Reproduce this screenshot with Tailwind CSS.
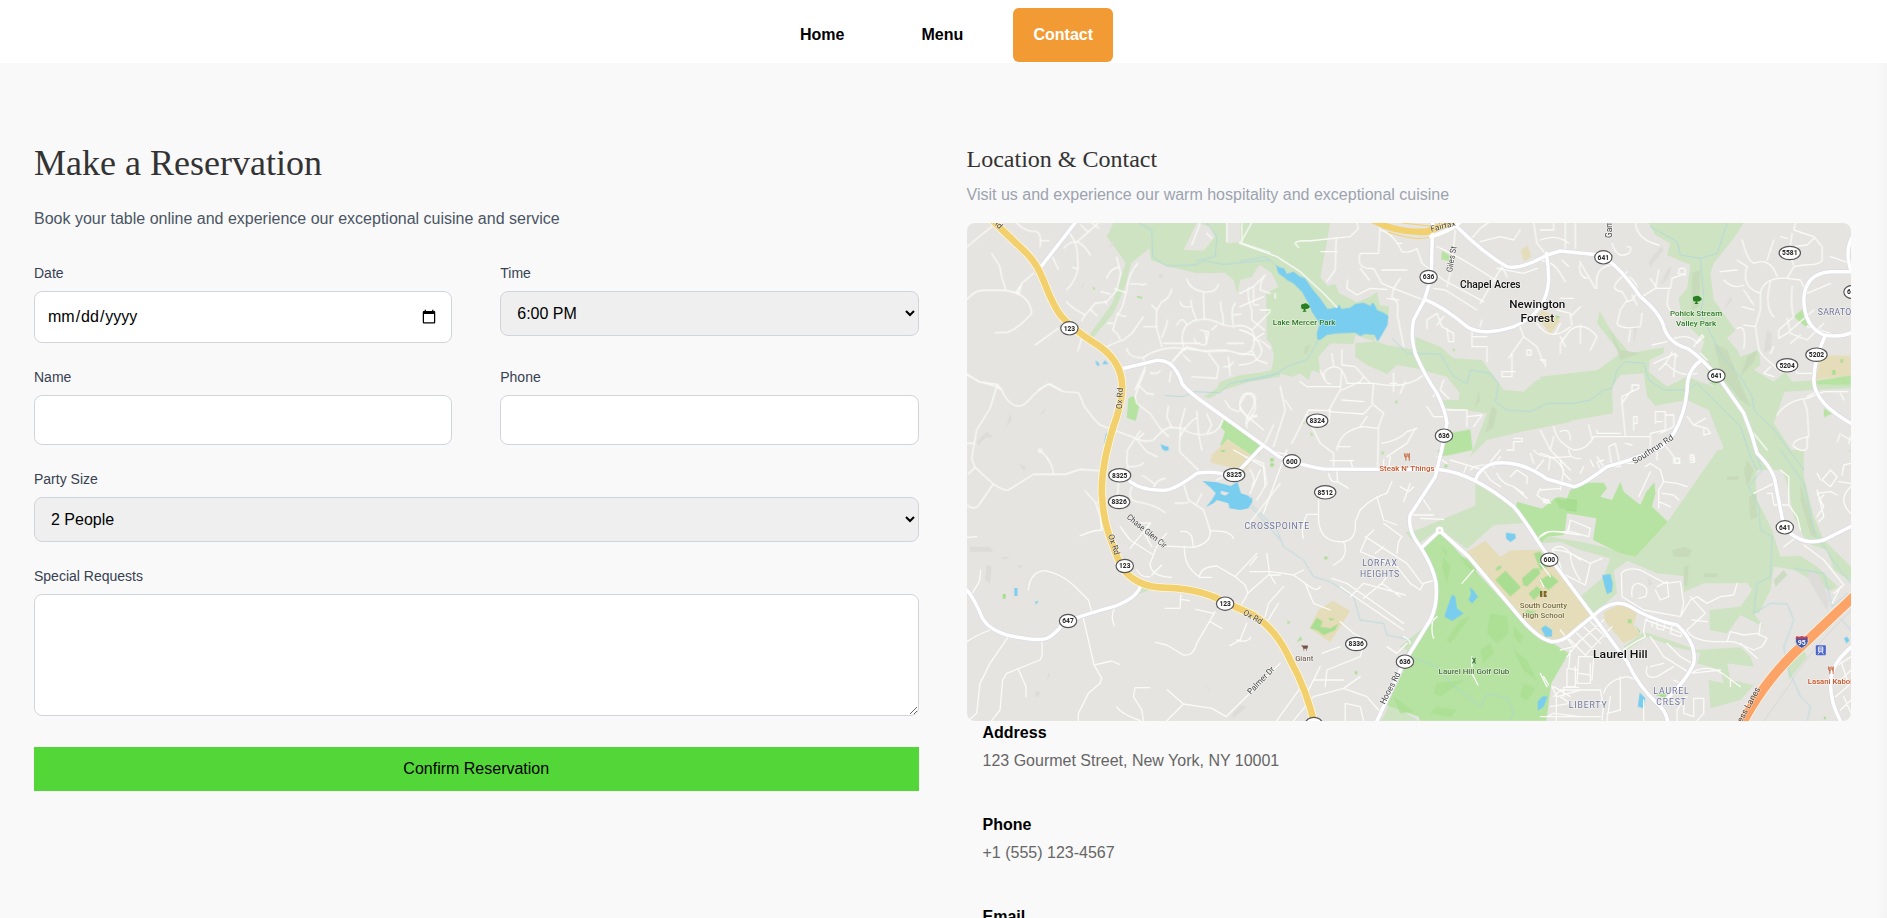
<!DOCTYPE html>
<html lang="en">
<head>
<meta charset="utf-8">
<title>Contact</title>
<script src="https://cdn.jsdelivr.net/npm/@tailwindcss/browser@4"></script>
</head>
<body class="h-[918px] overflow-hidden bg-[#f9f9f9] font-['Liberation_Sans',Arial,sans-serif] text-base text-black">
<div class="relative h-full overflow-hidden">
<header class="flex h-[63px] items-start bg-white pt-2 pl-[780px] font-bold">
  <a class="flex h-[54px] items-center px-5">Home</a>
  <a class="ml-[37px] flex h-[54px] items-center px-5">Menu</a>
  <a class="ml-[30px] flex h-[54px] w-[100px] items-center justify-center rounded-md bg-[#f29b34] text-white">Contact</a>
</header>
<main class="grid grid-cols-2 gap-12 pr-9 pl-[34px] pt-20">
  <section>
    <h1 class="font-['Liberation_Serif',serif] text-4xl leading-10 text-[#333333]">Make a Reservation</h1>
    <p class="mt-6 text-[#4b5563]">Book your table online and experience our exceptional cuisine and service</p>
    <form class="mt-8 text-black">
      <div class="grid grid-cols-2 gap-x-12 gap-y-6">
        <div><label class="mb-2 block text-sm text-[#374151]">Date</label><input type="date" class="block h-[52px] w-full rounded-lg border border-[#d1d5db] bg-white px-3"></div>
        <div><label class="mb-2 block text-sm text-[#374151]">Time</label><select class="block h-[45px] w-full rounded-lg border border-[#d1d5db] bg-[#efefef] px-3"><option>6:00 PM</option></select></div>
        <div><label class="mb-2 block text-sm text-[#374151]">Name</label><input type="text" class="block h-[50px] w-full rounded-lg border border-[#d1d5db] bg-white px-3"></div>
        <div><label class="mb-2 block text-sm text-[#374151]">Phone</label><input type="tel" class="block h-[50px] w-full rounded-lg border border-[#d1d5db] bg-white px-3"></div>
      </div>
      <label class="mt-6 mb-2 block text-sm text-[#374151]">Party Size</label>
      <select class="block h-[45px] w-full rounded-lg border border-[#d1d5db] bg-[#efefef] px-3"><option>2 People</option></select>
      <label class="mt-6 mb-2 block text-sm text-[#374151]">Special Requests</label>
      <textarea class="block h-[122px] w-full rounded-lg border border-[#d1d5db] bg-white p-3"></textarea>
      <button type="button" class="mt-[31px] block h-11 w-full bg-[#53d637]">Confirm Reservation</button>
    </form>
  </section>
  <section>
    <h2 class="font-['Liberation_Serif',serif] text-2xl leading-8 text-[#333333]">Location &amp; Contact</h2>
    <p class="mt-2 text-[#9ca3af]">Visit us and experience our warm hospitality and exceptional cuisine</p>
    <div class="mt-4 h-[498px] overflow-hidden rounded-lg bg-[#e5e4e0]">
<svg class="block h-full w-full" viewBox="2901 669 2652 1494" preserveAspectRatio="none" fill="none" stroke-linecap="round" stroke-linejoin="round" font-family="Roboto, sans-serif">
<!-- parks and land use -->
<g fill="#cee3c2">
  <g transform="translate(2850 390)">
    <path d="M490 279L470 320L527 398L487 520L418 615L430 622L490 550L525 470L543 400L598 355L603 390L650 408L740 430L825 428L850 450L862 490L870 450L905 440L930 400L980 390L1100 500L1140 279Z"/>
    <path fill="#e5e4e0" d="M740 279L700 360L760 362L795 320L780 290ZM830 279V340L895 335V279Z"/>
  </g>
  <g transform="translate(2850 1020)"><path d="M960 0L975 60L960 95L870 105L810 125L800 145L760 170L780 175L820 150L900 125L990 110V0Z"/></g>
  <g transform="translate(3720 630)">
    <path d="M0 38H55L90 90L130 110L215 170L262 228L285 222L297 250L350 277L390 260L410 245L418 285L447 290L443 320L400 395L345 400V440L380 465L440 492L470 465L525 475L620 500L658 550L655 570L600 570L605 592L740 610L690 740L740 690L830 668L990 636V490L890 510L850 545L790 540L725 450L640 445L600 410L525 380V420L440 405L345 375L340 402L270 400L235 440L240 490L215 480L205 510L180 490L155 500L100 485L0 518V500L95 480L105 410L80 390L78 250L115 230L95 190L60 165L0 205Z"/>
  </g>
  <g transform="translate(4620 630)">
    <path d="M0 500L90 490L172 480L240 430L170 340L178 302L210 360L268 430L370 412L370 430L327 450L325 485L380 530L440 500L520 530L480 430L492 395L425 330L415 265L440 235L450 165L380 135L390 100L345 75L325 38H610L580 85L520 160L510 190L520 270L585 360L560 385L590 420L600 440L655 420L660 465L640 480L700 515L735 485L755 515L830 510L930 500V535L820 540L732 545L700 640L740 700L790 780H495L550 712L530 665L505 600L440 570L345 587L320 560L310 490L240 495L215 530L218 610L0 648Z"/>
  </g>
  <g transform="translate(4620 1350)">
    <path d="M532 0H790L790 80L820 200L850 270L932 350V395L880 360L860 300L800 280L760 200L740 100L700 0H660L645 90L650 150L695 240L720 320L780 318L830 350L892 410L870 422L760 360L700 350L690 420L655 490H640L670 530L600 495L560 550L508 540L508 480L600 470L635 420L620 398L580 400L490 400L430 427V378L350 370L262 332L220 362L230 430L160 492L120 440L190 380L210 325L120 300L60 275L0 280V255L120 275L200 293L280 320L382 215Z"/>
    <path d="M250 590L310 545L400 575L470 600L600 592L630 620L640 650L560 640L570 690L640 705L600 750L510 775L505 690L550 700L540 660L470 640L480 610L400 590L320 560L260 600ZM740 630L790 600L800 620L745 690Z"/>
  </g>
  <g transform="translate(3750 1350)"><path d="M465 247L500 240L675 167V100L790 170L822 219L730 226L650 297L568 235L500 285ZM560 500L600 520L480 620L400 800L390 812H505L440 770L470 600L448 590Z"/></g>
  <path transform="translate(2850 1350)" d="M560 435L578 410L605 417Z"/>
</g>
<g fill="#c6d9b9" opacity=".8">
  <path transform="translate(4620 630)" d="M455 190L480 180L475 290L455 300ZM520 400L560 420L600 520L630 590L600 570L545 500ZM205 350L240 420L300 430L240 450ZM620 440L650 420L640 455L600 500Z"/>
  <path transform="translate(4620 1350)" d="M620 30L640 60L620 110L610 60ZM625 140L645 130L650 200L630 210ZM560 80L595 78L590 90H560ZM395 300L430 290L455 300L445 320H400ZM430 350L445 345L440 410L430 405ZM490 370H530V382H490ZM780 100L810 200L830 265L810 255L780 150ZM700 390L730 360L740 375L705 410Z"/>
  <path transform="translate(3720 630)" d="M755 590L770 600L760 650L735 670ZM715 545L720 570L705 595ZM195 410L210 405L200 430L190 432Z"/>
</g>
<g fill="#dddcd8">
  <path transform="translate(2850 1020)" d="M180 218L185 240L170 258ZM290 200L280 220L268 224ZM110 275L130 290L105 295L85 315L80 305ZM205 370L225 380V395Z"/>
  <path transform="translate(2850 1350)" d="M60 290L120 290L130 305H60ZM155 320H180L170 328H155ZM110 345L125 350L120 400L105 390ZM200 345L220 348L210 355ZM300 675L290 690L295 670ZM255 725H272L265 740H255ZM870 765L890 770L850 805L845 795ZM760 708L775 715L780 722Z"/>
  <path transform="translate(4620 630)" d="M360 110L370 120L330 170L325 155ZM380 180L395 170L380 210L360 225ZM570 260L575 270L550 300ZM680 360L695 370L690 420L670 430ZM280 350L290 352L280 400Z"/>
  <path transform="translate(4620 1350)" d="M810 360L840 380L865 450L860 480L840 450L800 380ZM320 340L322 380L335 400L325 410Z"/>
  <path transform="translate(2850 390)" d="M625 433H642L630 447ZM490 332L495 340L475 355ZM400 460L402 465L390 478Z"/>
</g>
<g fill="#b6e3a1">
  <path transform="translate(4620 1350)" d="M90 120L145 98L190 98L200 115L180 140L215 150L240 95L250 125L300 165L318 125L342 97L345 130L335 170L382 215L285 320L240 310L158 270L168 205L80 190L73 245L0 250V180L45 145L80 145Z"/>
  <path transform="translate(4620 1350)" fill="#a4db8f" d="M60 145L110 150L108 185L57 180Z"/>
  <path transform="translate(3750 1350)" d="M568 245L518 292L552 365L557 390V490L490 600L410 765L505 800L510 812H888L903 700L955 610L900 575L820 520ZM800 155L860 172L910 185L920 140L950 145L940 255L890 260L865 285L795 180ZM560 0H620L575 20Z"/>
  <path transform="translate(2850 1020)" d="M820 235L935 315L910 350L832 298L820 320L810 315L825 275L812 262ZM535 175L550 168L567 198L557 243L530 233Z"/>
  <path transform="translate(3720 630)" d="M0 648L70 705L55 735L0 700ZM620 670L690 658L697 720L620 737L605 735ZM605 122L630 138L625 153L603 148ZM188 635L197 637L190 643ZM465 572h7v8h-7zM635 415l10 3l-4 8ZM210 668l8 2v8h-6ZM93 745h8v8h-8zM93 760h8v8h-8zM423 724h8v9h-8z"/>
  <path transform="translate(4620 630)" d="M760 320L785 298L805 340L795 350ZM820 515L930 495V525L822 522ZM850 595L875 610L850 622ZM505 518L550 510L520 525ZM925 720L930 720V728Z"/>
  <path transform="translate(2850 390)" d="M428 470L436 474L430 482ZM560 497L577 500L575 507L562 503Z"/>
</g>
<g fill="#e5ddb9">
  <path transform="translate(3750 1350)" d="M705 272L650 305L820 505L890 572L940 568L1028 500L945 390L885 315L865 299L780 301L750 320ZM178 535L205 480L248 452L300 482L240 577Z"/>
  <path transform="translate(4620 1350)" d="M190 487L240 462L290 487L280 525L300 555L250 580L195 515Z"/>
  <path transform="translate(2850 1020)" d="M780 365L785 345L832 298L910 350L885 392L790 370Z"/>
  <path transform="translate(3720 630)" d="M842 120L862 107L873 140L850 155ZM890 320L905 300L960 330L930 373ZM0 715L40 745L15 780H0Z"/>
  <path transform="translate(4620 630)" d="M840 437L930 437V497L825 508Z"/>
</g>
<g fill="#a9de92">
  <path transform="translate(3750 1350)" d="M735 390L765 362L812 412L780 440ZM735 355L750 345L755 352L742 363ZM815 385L850 355H865L870 370L830 410L818 405ZM868 390L900 372L925 393L895 420L870 400ZM835 430L860 408L878 425L850 450ZM850 310L870 305L895 350L870 360ZM180 535L200 503L218 515L210 530L240 535L265 520L255 540L220 555L200 540ZM235 503L255 507L240 513ZM222 320h10v8h-10zM60 25h10v10h-10zM60 40h10v10h-10zM314 663h7v10h-7zM140 575L152 558L155 570ZM112 513h6v8h-6zM583 44h8v8h-8zM912 145L980 155L975 180L928 175ZM820 490L830 480L860 485L840 495Z"/>
  <path transform="translate(3750 1350)" opacity=".75" d="M570 290L590 300V320ZM580 320L600 350L590 400L575 350ZM720 490L770 500L775 550L740 580L710 550ZM630 320L670 330L680 370L650 350ZM630 510L660 500L600 580L590 570ZM690 600L720 580L730 610L700 640ZM560 700L640 690L570 740L550 730ZM790 600L830 630L860 690L820 660ZM790 530L820 560L810 580L790 560ZM430 740L470 770L490 785L450 790ZM560 770L620 780L600 800L540 790ZM820 700L855 715L830 750L810 740Z"/>
  <path transform="translate(4620 630)" d="M875 480h10v14h-10zM900 448h8v10h-8zM45 315L60 320L50 328Z"/>
  <path transform="translate(4620 1350)" d="M262 508h12v12h-12zM285 525L300 545L297 548ZM345 735L375 730L380 745ZM850 800h6v8h-6z"/>
  <path transform="translate(2850 1350)" d="M158 432h9v14h-9zM810 0h18l-10 8Z"/>
</g>
<!-- water -->
<g fill="#79cdee">
  <path transform="translate(3720 630)" d="M107 165L118 172L132 175L140 192L160 185L180 200L195 205L215 235L240 265L262 297L290 292L297 284L303 297L330 293L345 282L370 278L390 288L397 277L405 287L410 300L430 308L444 317L442 345L425 375L412 395L403 375L375 372L360 378L345 368L290 370L260 375L240 390L231 388L230 370L238 340L215 305L205 280L185 245L160 220L140 210L132 202L115 190Z"/>
  <path transform="translate(2850 1350)" d="M757 93L800 97L842 108L862 95L872 130L895 137L906 155L895 175L870 180L838 175L835 160L800 150L790 160L768 171L785 150L797 130L780 112ZM193 414H202V438H193ZM255 455L265 452L258 464Z"/>
  <path transform="translate(2850 1350)" fill="#e5e4e0" d="M812 122L838 128L825 137L812 132Z"/>
  <path transform="translate(2850 1020)" d="M632 312L645 318L655 320L656 330L645 333L635 325ZM436 62L446 68L448 78L440 76ZM456 72L465 61L474 72ZM468 280L476 277L466 315L462 310Z"/>
  <path transform="translate(3750 1350)" d="M605 434L615 440L620 475L640 490L605 513L582 500L590 475ZM658 412L668 420L683 440L665 460L655 450L662 430ZM767 248L795 252L796 265L780 276L767 265ZM872 535L885 526L905 540V560L885 560ZM862 755L875 740L892 738L880 770L862 782ZM0 140L6 145V155L0 163Z"/>
  <path transform="translate(4620 1350)" d="M185 375L210 372L217 400L215 425L200 432L193 410ZM298 728L315 745L310 775L292 770ZM910 565L920 560L927 572L918 580Z"/>
</g>
<g stroke="#a7d5e4" stroke-width="2">
  <path transform="translate(2850 390)" d="M565 279L605 300L608 380L650 408L735 405L760 392L820 403L960 390M770 279L800 320L795 380L740 392"/>
  <path transform="translate(3720 630)" d="M0 153L75 140L105 165M0 515L90 500L150 465L200 450L235 390M455 385L500 430L600 432L640 500L680 520L690 480L750 490L775 520L765 575L800 600L870 605L920 580L990 580"/>
  <path transform="translate(4620 630)" d="M90 582L150 570L190 540L215 535L230 480L255 455L310 460L325 510L370 540L440 540L470 520L550 600L600 650L630 740L650 780M330 50L410 95L420 135L480 145L530 130L560 40M480 150L490 260L480 310L545 440L600 500L635 560L640 600L700 660L790 780"/>
  <path transform="translate(4620 1350)" d="M640 0L665 60L625 110L655 170L660 240L695 260L690 380L650 400L640 490L690 460L740 462L760 510L730 590L740 650L780 740L810 770L800 812M760 355L850 370L875 470L920 430M720 0L790 100L820 240L870 320L930 400M900 505L930 540"/>
  <path transform="translate(3750 1350)" d="M0 160L80 240L100 290L160 330L190 380L240 395L310 440L330 510L400 520L410 555L480 570M480 620L560 650L600 700L690 770L710 730L770 745L790 790L780 812"/>
  <path transform="translate(2850 1020)" d="M645 167L700 170L730 155L810 158L840 130L960 105L990 100M900 500L930 530L990 600"/>
</g>
<!-- local streets -->
<g stroke="#fafaf7" stroke-width="4">
  <g transform="translate(2850 390)"><path d="M51 350L125 290M125 370L150 410L155 440L167 480M51 508Q75 480 100 481L165 481Q200 488 207 490L215 460L250 430M190 487Q240 500 245 550Q200 600 170 607L135 608M207 490L200 484L215 462M255 645L325 595M200 279Q225 305 260 305Q275 310 270 350M270 332H298M307 380L325 418M350 300Q380 330 382 370L384 415Q378 450 350 480M368 412L382 416M342 355Q355 335 380 335Q405 345 420 375M382 335L445 279M393 285L410 303L418 305M425 279L447 295M350 515Q360 530 405 555L395 572M405 555L435 520L470 515L500 480L512 430L500 382M452 485L480 492M465 513L470 523M470 445Q480 415 505 412M420 537L440 557M493 476L525 487M563 400Q535 430 530 480L517 530L500 560L488 600L500 610L510 627M540 462H570Q585 468 588 460M500 550Q515 560 527 558M472 580H488M395 625L383 663M467 653Q485 640 520 630L545 610L580 560M580 590H622M605 525L620 540L635 515Q655 510 665 478M620 540L618 590L635 650M652 570Q650 590 635 622M530 655Q535 685 580 683Q600 665 650 655Q690 650 705 660M580 683L585 705M555 780L585 712M600 728Q620 735 630 722M658 755L663 725M667 695L710 650L765 665L835 662L880 675L905 662Q920 625 905 600Q880 580 850 590L820 585Q790 570 765 567L730 572L705 590Q690 620 700 650M710 448Q720 480 760 485L762 567M760 485Q800 490 805 462M690 515Q695 535 720 530M722 510Q725 540 738 567M680 585Q690 565 700 570L712 585M750 600L775 605Q770 640 765 645Q735 645 732 625M765 605L770 640M800 585L785 600M812 515Q810 535 818 555L820 585M855 520Q840 540 850 585M850 555L873 552M830 640H880M895 472Q890 500 905 540L905 570L943 600M910 525H925M945 435Q930 450 930 480L960 490M960 545L905 600M905 662L920 690L950 700M912 630Q930 625 960 655M775 670L805 710L800 745L725 740M835 680L840 735M820 710H838L850 695M700 675L720 695M51 735L90 755L140 770L155 780M265 780L295 762L330 780M875 279V340L960 368M750 279L725 345M830 279V335M770 310L785 325"/></g>
  <g transform="translate(2850 1020)"><path d="M51 102L85 125L142 133L155 150Q180 205 215 197Q230 190 250 165Q290 130 300 132L340 155L385 158Q395 175 400 195L430 235L450 255L545 290Q580 310 610 300Q640 265 660 262L695 265Q730 290 770 282Q805 280 820 235M142 133L120 205L80 270L65 355L75 382L130 432M51 310H70M75 382L55 402M51 495Q75 515 90 490L130 432Q165 455 175 450L250 403H345L390 388L450 392M310 403Q310 370 275 335M405 453L435 485L450 530L455 570M442 487L450 480M585 90L565 140L555 170L560 190L600 220L630 265L655 290M565 135L590 160L610 163M580 280L560 300M570 273L532 330L530 360L535 400M565 305L590 335L620 350M532 380Q570 382 580 368M655 198L650 230L665 262M705 205L690 260L688 335L745 390M690 290L705 262M740 213L745 280L755 330M770 222L785 255L770 282M705 265Q735 230 740 235M825 182L840 205L865 215M870 200L895 240L920 225M870 210Q865 165 890 160Q915 155 915 180Q910 205 895 225L888 245L890 262M905 225L920 230M970 255L945 310M850 395L800 420M610 445Q615 420 645 415M577 406Q600 420 610 430M505 430L503 465M545 440Q530 480 560 485Q620 495 645 518M700 430L715 480L760 510L780 570M755 460L740 490M675 490L715 488M885 350L940 370L950 430L920 480M900 390Q920 420 905 440M990 430L890 560M555 550L600 548M590 570L600 548M640 10H750M670 60L700 25L760 32L830 30"/><circle cx="270" cy="332" r="5"/></g>
  <g transform="translate(3720 630)"><path d="M35 38L0 100L110 140L180 185L250 250L290 292M165 100Q170 90 205 93L330 80L355 55L350 38M165 100L175 113M242 125H290M288 85L285 180L260 215M420 38L415 130H360Q345 180 400 175L425 220L460 235L550 270M420 60Q460 70 485 125Q510 130 530 115L545 160L610 210L730 275M470 100H485M460 235L455 260L472 280V318L490 408M425 180H500M387 210L360 175M322 210L320 235L350 255L390 235L440 238M460 235L480 205M440 265L475 270M590 110Q660 140 780 220M620 230L635 170L645 60M580 235L615 240L710 300M720 280L785 170L800 200M690 90L720 55L745 38M720 95L780 80L820 90L840 60M880 38L890 100L915 130M590 310L560 330V355M590 310L605 350L640 370V395H625L620 355M610 320L590 345M695 355V410H740V455M695 380H740M725 330L720 350M835 340L850 380L890 410L910 460M850 380L815 430V500H785V485H825M815 430L805 445M900 450H915V470M860 420h12v15h-12zM890 175L850 190L770 175M890 340Q930 400 990 350M960 340L945 370M70 200L40 230L0 250M40 230V280M0 290L70 260M0 360Q50 370 65 420Q60 460 0 465M40 390L70 370M0 430L40 435M105 250V265M60 300H90M120 528L135 600L100 710M155 600L135 570M155 700L205 600L265 602L300 540L305 480M180 515L200 530H300M240 480Q260 530 270 520M400 520H320Q310 470 280 470Q240 480 255 510M400 520Q500 540 550 495M400 520L395 580L430 610L415 650L412 780M270 600L265 640M265 605L370 612L400 580M305 570L370 575M370 500L360 515L305 540M460 490V545M450 520H470M305 420V465L345 470L390 520M275 430L280 465M200 610L220 660L240 700L280 730V780M290 720Q300 660 370 650L412 655M290 710H330M360 650L380 620M425 700Q480 690 500 665L530 655M480 550L495 515M440 740L500 700L525 655M0 580L20 550Q50 555 45 600L20 640M0 600L70 660M145 735L80 720M610 510L600 540L625 565M590 540L580 560M560 590L580 620H610M620 600L680 600V650M680 620L725 615L700 650M690 780L700 770L790 755L870 780M820 685H845V695H820V720H800M900 660L930 720L990 780M870 730L880 760M940 680L930 720M760 770L780 740M880 720Q900 750 990 740"/></g>
  <g transform="translate(4620 630)"><path d="M0 90Q50 70 85 100M75 38V115M105 38V115M0 60H40V38M215 100Q230 150 265 130Q280 110 260 110M285 38Q290 90 355 105M0 150Q40 155 60 190L75 215M65 150L85 170M118 155L165 235M118 165Q115 200 140 205M215 165Q160 170 170 235M260 185L230 215Q210 240 245 245L260 270L240 300L230 340Q240 360 300 350L305 310M265 200Q310 230 275 270L260 275M275 255L290 285M305 260L345 235L355 180M330 205L350 235H390L395 205L435 190L433 175L418 175L413 190L435 195M385 240L380 285L400 320M60 265L100 265M50 300L90 310L95 345M120 290L90 320M60 430V400L90 360Q130 330 170 380L150 420M120 345V400M60 380L75 410M270 360L265 395M335 405L380 395M340 460L405 430L410 440M375 460L400 480Q430 500 470 490M355 480Q380 460 395 425M405 430L400 500M400 385Q450 370 470 400L490 380L485 375L470 395L460 410M480 430L500 450M540 185L590 180M550 210Q580 240 610 225M590 150L620 170Q600 230 660 250Q670 200 740 205L780 210L800 250L870 220M605 90Q620 150 640 160Q690 140 710 200M700 90L680 150M720 80L740 85M765 38L760 60L820 80L845 110V150Q840 165 790 165L760 170L740 205M755 70L745 130L760 165M760 110L800 105L820 85M660 250L660 300L645 350L655 420L670 440L720 485M690 215Q670 290 700 320M610 240L640 285M605 290L640 300M590 355Q620 340 610 415M645 350L610 345M690 430L700 410M690 470L670 490L700 500M755 230Q750 290 760 320L715 360V385L740 370L820 300M740 325L750 370L800 390L850 340M780 375L750 400M800 350L870 370M870 140L930 160M760 465L770 490H820M710 615Q740 570 800 565L850 545H920M790 570L800 600L805 680Q750 690 760 710Q790 730 800 715L800 680M800 560L830 545M900 550L910 570M900 670L890 695M905 675L930 690M930 680L925 700M640 670L680 720M240 670H170V660M245 585V560L295 535V525H275V545M270 545L245 580L255 680M280 640V620H290V640H280V660M345 640V605H375V660L330 670V720M345 635H365M375 615H400V650L360 670M440 620L460 645L500 655L510 670L490 675V655M460 645L495 625M40 650Q50 700 100 720Q140 720 160 680H330M60 665Q90 650 90 690M145 645L155 685M170 740L190 770L180 780L170 755M205 710L225 700L240 770L215 770ZM255 700L275 705M260 745H290V760H260M350 750V710L370 700L400 740V760M405 745h12v15h-12zM450 735h10v15h-10z"/></g>
  <g transform="translate(2850 1350)"><path d="M51 262L80 260M92 360L88 395L68 428M235 420Q240 365 285 362Q330 370 370 405L415 450L425 485M390 257L430 243L455 240L450 150M51 575Q80 555 120 540M175 560L120 640L90 700L80 790L55 812M275 575Q280 620 270 630L170 670L158 690L150 780L125 812M205 658L228 710V740M400 505L432 645L455 685L450 700L415 730L385 790V812M432 645L485 633L508 643M493 475Q480 500 493 527M598 713H555L550 740L575 780L580 812M500 770Q510 790 570 812M650 812L700 762L652 720M700 762L785 775L828 800L990 640M617 577L650 585L700 615Q730 620 740 580L795 485M737 478L790 490M780 515L815 535M645 475H690L692 435M690 448L718 452M875 462L893 430L955 375H990M855 380L920 310M748 382Q750 350 800 348L855 380L885 405L893 430M945 525L985 460M890 520L870 570L840 587M860 570Q890 580 902 562M703 290Q700 350 750 382H785M950 310L958 370M510 230L540 270L610 315M540 295L600 220M610 315Q620 280 650 250M580 245L605 290M610 315L600 340Q600 380 665 382M605 375L635 345M560 360Q575 385 600 380M730 290L725 260Q715 240 692 245M780 243Q840 240 850 265M780 240Q785 280 730 292L640 288M850 0L940 50L945 110"/></g>
  <g transform="translate(3750 1350)"><path d="M260 65L262 95L295 115M235 70Q240 100 262 95M300 30L310 60M240 32H310M205 150V210Q210 280 280 275Q320 270 315 215L330 180Q370 140 410 130M205 193H170Q150 240 160 265M280 275Q300 320 250 345M410 130L425 95M420 20L415 58M400 30V50H430M380 140L400 210L440 225M450 110L475 125L490 110M460 155L480 100M400 220L455 260L445 275L440 310M345 260L470 340L515 400M370 240L350 260L330 305L440 350M375 310L400 290M440 350L480 400L510 420L520 400L555 390M410 380L395 400L340 445M245 385L290 400L460 520M270 410L460 540M300 440L340 400L465 435M395 400L450 440M110 0L40 190M30 60L0 130M0 345L20 320M0 365H60L100 370L130 375L165 400L190 460L240 480M60 375L75 400M45 500L55 460L100 410M130 375L160 360M165 400Q200 430 210 410M270 515L310 550L345 570L330 620L230 660L225 710M190 690L280 690M215 610L270 590M280 715L350 740L385 780M130 812L190 740L280 715L330 680M80 812L160 700M170 730L210 650M285 812V760L330 770L340 812M410 590L440 610L470 580M460 560Q480 570 480 580M480 195H550M510 205L580 208M520 150L540 180M600 30L700 60L750 0M560 20L590 40M640 70L650 45M700 60L720 90L750 110M740 70Q750 100 790 110L830 145M780 80L800 60L830 80V100M790 110L820 130M870 115L860 135L890 160M880 150h15v8h-15zM895 60L900 20M855 60L880 30M930 30L940 70L960 90M865 265Q880 240 920 245L990 255M910 300Q960 300 990 330M870 390L880 410M550 500Q540 540 550 565M540 520L560 500M665 670L683 705M665 620V650M635 400L670 360M960 600L955 655L980 660M990 570L950 620M905 710L920 740L990 720M890 800L910 790L990 800M918 735V812M940 740V712H985M880 680L895 705"/></g>
  <g transform="translate(4620 1350)"><path d="M0 10Q50 20 70 60L60 120M0 120L60 115M10 145L30 160M85 0Q90 30 120 25M150 30L160 50M175 35L190 30M120 70L130 50M0 260L25 245L90 245L145 260L150 235L90 210L80 250M90 210L85 240M35 300Q60 275 90 310L150 340L135 405L65 370Q60 330 35 300M90 310Q90 350 120 390M150 340L185 325M0 340L30 380M245 440L243 370Q260 350 300 360L375 400L420 395L430 460L420 500M275 440Q270 400 295 400Q330 410 315 440L295 445M245 440L310 480L420 500L450 450L470 440L500 460L540 440L580 435L590 400M350 410L380 395L385 440L360 450L345 420M310 545L315 510L335 495M315 510L400 540L425 550M335 515V530M350 512V535L370 540L375 515M395 525L390 550L420 560L430 545M440 540L495 490L450 440M455 510L500 515M440 540Q450 570 520 575H560L570 545L610 555L650 550L680 565L665 590L640 600L580 575L560 575M660 520L655 555M600 580L650 625M310 545L315 560Q260 590 250 600M330 560L370 620L450 670M380 580L420 620L455 640M320 650Q310 690 350 680L400 650M370 640L330 650M400 690L420 700L450 670L540 660M450 670Q500 640 545 670L600 710M570 690V710M315 50L330 40L360 60L370 95L355 120V175M295 140L330 65M370 95L410 100L440 110M365 130L400 135L415 150M355 155L390 170M405 25h12v15h-12M450 22h12v15h-12M680 130H695L700 165L745 165M745 160V80L720 60M640 130L700 100M730 290L770 260M790 285L850 330L910 405L880 430M900 410L875 460M745 165L770 200L780 240M830 200L850 170L830 130L870 125L890 135M870 60L890 80L870 110L845 90L870 60M830 70L840 90M835 150L850 135M830 120L850 200L835 215M895 95L930 100M905 75L910 45L930 40M930 110Q890 150 930 190M100 540L160 600M80 560L140 620M120 520L180 580M140 505L195 560M100 590L190 510M130 620L215 530M150 640V700H110L115 620H160L155 690M105 650V710H80V655M115 670L150 675M40 740L60 720H180L190 770M60 740L90 760L30 770M0 800H180M180 760H190L185 810M190 730Q200 690 260 680L290 690M240 680V780L200 790M40 710L90 740M200 812L210 740M310 750V812M430 750L410 780V812M430 750V790L460 800V745H490V790L470 812M380 760L440 740M870 660L932 620M900 630L920 690M890 700L932 660M885 740L932 700M900 780L932 750M910 740L932 790M0 670L20 710M60 540L100 590L60 600"/></g>
</g>
<!-- collector roads, drawn as a soft casing under a white line -->
<g id="major">
<g stroke="#d9dae8" stroke-width="14">
  <path id="r1" d="M3120 804L3225 669M3362 1107L3470 1081Q3510 1080 3530 1115Q3545 1140 3545 1150Q3560 1170 3600 1200L3840 1372Q3920 1400 3970 1407L4320 1409Q4420 1420 4540 1520Q4570 1555 4620 1635L4780 1850L4880 1985Q4915 2060 4970 2110Q4995 2130 5002 2163"/>
  <path id="r2" d="M4297 669L4293 830L4273 898L4240 960Q4230 1010 4245 1060Q4270 1120 4310 1180Q4335 1230 4340 1270L4323 1355L4305 1430L4230 1545Q4220 1590 4260 1640Q4310 1720 4308 1770Q4310 1820 4290 1860L4210 1990L4130 2163"/>
  <path id="r3" d="M4370 680Q4450 760 4520 800Q4560 810 4640 765L4680 753L4800 765Q4860 800 4920 890Q4980 940 4990 980Q5005 1030 5060 1045Q5100 1070 5160 1140L5230 1240Q5255 1300 5270 1360Q5320 1410 5325 1450L5350 1580Q5400 1640 5470 1620L5560 1575M4273 898Q4330 920 4400 980Q4450 1010 4540 980Q4640 940 4645 840Q4645 800 4638 760M5100 1083Q5060 1110 5060 1170Q5055 1240 5020 1300L4985 1340Q4900 1380 4820 1400Q4740 1460 4720 1460L4640 1437Q4560 1380 4480 1390Q4440 1400 4425 1440"/>
  <path id="r4" d="M3390 1445Q3430 1475 3500 1470Q3530 1465 3590 1420Q3640 1410 3700 1430L3790 1335M2901 1770Q2925 1800 2945 1850Q2960 1885 3020 1905Q3110 1925 3140 1915Q3165 1905 3190 1870Q3230 1850 3340 1820Q3410 1795 3420 1760"/>
  <path id="r5" d="M4265 1642L4318 1592L4405 1670L4570 1865Q4620 1920 4655 1925Q4690 1925 4720 1895L4800 1830Q4850 1795 4890 1820Q4950 1860 5030 1875Q5090 1930 5080 1990Q5060 2040 4985 2110M5560 815H5490Q5415 820 5410 895Q5410 980 5470 1005Q5520 1015 5560 995M5555 710Q5530 760 5555 820M5475 1005Q5440 1080 5440 1140Q5440 1210 5560 1275M5560 1935Q5490 1990 5490 2050Q5490 2110 5520 2163"/>
</g>
<g stroke="#ffffff" stroke-width="10.5"><use href="#r1"/><use href="#r2"/><use href="#r3"/><use href="#r4"/><use href="#r5"/></g>
</g>
<circle cx="4318" cy="1591" r="8" fill="#e5e4e0" stroke="#fff" stroke-width="7"/>
<!-- arterials -->
<g>
  <path stroke="#fff7df" stroke-width="25" d="M2960 645L3080 760Q3110 790 3130 840Q3160 920 3185 950Q3220 990 3300 1040Q3370 1090 3366 1170Q3365 1210 3340 1280Q3300 1410 3306 1490Q3310 1570 3340 1640Q3360 1700 3380 1720Q3420 1760 3490 1763Q3600 1765 3670 1805L3760 1845Q3830 1890 3870 1980Q3920 2070 3945 2180"/>
  <path stroke="#f2d06e" stroke-width="20" d="M2960 645L3080 760Q3110 790 3130 840Q3160 920 3185 950Q3220 990 3300 1040Q3370 1090 3366 1170Q3365 1210 3340 1280Q3300 1410 3306 1490Q3310 1570 3340 1640Q3360 1700 3380 1720Q3420 1760 3490 1763Q3600 1765 3670 1805L3760 1845Q3830 1890 3870 1980Q3920 2070 3945 2180"/>
  <path stroke="#f2d06e" stroke-width="20" d="M4110 655Q4180 700 4280 695L4380 655"/>
  <path stroke="#f2d06e" stroke-width="3" d="M4165 697Q4260 730 4310 703M4205 669L4290 678"/>
  <path stroke="#fff" stroke-width="11" d="M4292 710Q4360 690 4385 660"/>
  <path stroke="#fff1e0" stroke-width="33" d="M5220 2180Q5280 2060 5380 1960L5570 1780"/>
  <path stroke="#fca468" stroke-width="28" d="M5220 2180Q5280 2060 5380 1960L5570 1780"/>
  <path stroke="#d2d2d0" stroke-width="2" d="M5553 1830Q5420 1960 5370 2050L5290 2163"/>
</g>
<!-- route shields -->
<g fill="#fff" stroke="#555557" stroke-width="3.5">
  <ellipse cx="3208" cy="985" rx="26" ry="20"/><ellipse cx="3374" cy="1698" rx="26" ry="20"/><ellipse cx="3675" cy="1811" rx="26" ry="20"/><ellipse cx="3204" cy="1863" rx="26" ry="20"/>
  <ellipse cx="3359" cy="1426" rx="33" ry="20"/><ellipse cx="3357" cy="1506" rx="32" ry="20"/><ellipse cx="3702" cy="1425" rx="32" ry="20"/><ellipse cx="3951" cy="1262" rx="32" ry="20"/><ellipse cx="3975" cy="1477" rx="32" ry="20"/><ellipse cx="4068" cy="1932" rx="32" ry="20"/>
  <ellipse cx="3875" cy="1384" rx="26" ry="20"/><ellipse cx="4285" cy="831" rx="26" ry="20"/><ellipse cx="4331" cy="1307" rx="26" ry="20"/><ellipse cx="4214" cy="1985" rx="26" ry="20"/><ellipse cx="4647" cy="1679" rx="26" ry="20"/>
  <ellipse cx="4809" cy="772" rx="26" ry="20"/><ellipse cx="5148" cy="1127" rx="26" ry="20"/><ellipse cx="5353" cy="1582" rx="26" ry="20"/><ellipse cx="5368" cy="759" rx="32" ry="20"/><ellipse cx="5448" cy="1064" rx="32" ry="20"/><ellipse cx="5360" cy="1096" rx="32" ry="20"/><ellipse cx="5556" cy="876" rx="26" ry="20"/><ellipse cx="3941" cy="2172" rx="26" ry="20"/>
</g>
<g fill="#2c2c2c" font-size="20" font-weight="800" text-anchor="middle">
  <text x="3208" y="992">123</text><text x="3374" y="1705">123</text><text x="3675" y="1818">123</text><text x="3204" y="1870">647</text><text x="3359" y="1433">8325</text><text x="3357" y="1513">8326</text><text x="3702" y="1432">8325</text><text x="3951" y="1269">8324</text><text x="3975" y="1484">8512</text><text x="4068" y="1939">8336</text><text x="3875" y="1391">600</text><text x="4285" y="838">636</text><text x="4331" y="1314">636</text><text x="4214" y="1992">636</text><text x="4647" y="1686">600</text><text x="4809" y="779">641</text><text x="5148" y="1134">641</text><text x="5353" y="1589">641</text><text x="5368" y="766">5581</text><text x="5448" y="1071">5202</text><text x="5360" y="1103">5204</text><text x="5545" y="883">6</text>
</g>
<!-- place, road and point-of-interest labels -->
<g text-anchor="middle" font-weight="500" stroke="#ffffff" stroke-opacity=".5" stroke-width="4" paint-order="stroke">
  <g fill="#111" font-size="30">
    <text x="4470" y="863" textLength="182" lengthAdjust="spacingAndGlyphs">Chapel Acres</text><text x="4611" y="923" textLength="168" lengthAdjust="spacingAndGlyphs" font-size="33">Newington</text><text x="4611" y="965" textLength="101" lengthAdjust="spacingAndGlyphs" font-size="33">Forest</text><text x="4860" y="1975" textLength="164" lengthAdjust="spacingAndGlyphs" font-size="33">Laurel Hill</text>
  </g>
  <g fill="#6e7499" font-size="26" font-weight="400">
    <text x="3830" y="1588" textLength="194">CROSSPOINTE</text><text x="4138" y="1699" textLength="104">LORFAX</text><text x="4138" y="1731" textLength="118">HEIGHTS</text><text x="4762" y="2125" textLength="114">LIBERTY</text><text x="5012" y="2082" textLength="106">LAUREL</text><text x="5012" y="2114" textLength="88">CREST</text><text x="5452" y="944" textLength="136" text-anchor="start">SARATOGA</text>
  </g>
  <g fill="#2f7a27" font-size="24">
    <text x="3912" y="974" textLength="188" lengthAdjust="spacingAndGlyphs">Lake Mercer Park</text><text x="5087" y="948" textLength="156" lengthAdjust="spacingAndGlyphs">Pohick Stream</text><text x="5087" y="978" textLength="120" lengthAdjust="spacingAndGlyphs">Valley Park</text><text x="4421" y="2021" textLength="212" lengthAdjust="spacingAndGlyphs" fill="#4d6d43">Laurel Hill Golf Club</text>
  </g>
  <g fill="#75693a" font-size="24"><text x="4629" y="1824" textLength="142" lengthAdjust="spacingAndGlyphs">South County</text><text x="4629" y="1854" textLength="126" lengthAdjust="spacingAndGlyphs">High School</text></g>
  <g fill="#c75528" font-size="24"><text x="4220" y="1412" textLength="166" lengthAdjust="spacingAndGlyphs">Steak N’ Things</text><text x="5422" y="2051" text-anchor="start" textLength="140" lengthAdjust="spacingAndGlyphs">Lasani Kabob</text></g>
  <text x="3912" y="1982" fill="#7d6a62" font-size="24" textLength="54" lengthAdjust="spacingAndGlyphs">Giant</text>
  <g fill="#444" font-size="25" font-weight="400">
    <text transform="translate(3367 1196) rotate(-86)" textLength="64" lengthAdjust="spacingAndGlyphs">Ox Rd</text><text transform="translate(3334 1636) rotate(72)" textLength="64" lengthAdjust="spacingAndGlyphs">Ox Rd</text><text transform="translate(3754 1858) rotate(30)" textLength="62" lengthAdjust="spacingAndGlyphs">Ox Rd</text>
    <text transform="translate(3435 1600) rotate(39)" textLength="146" lengthAdjust="spacingAndGlyphs">Chase Glen Cir</text><text transform="translate(3788 2047) rotate(-46)" textLength="104" lengthAdjust="spacingAndGlyphs">Palmer Dr</text><text transform="translate(4177 2068) rotate(-63)" textLength="104" lengthAdjust="spacingAndGlyphs">Hooes Rd</text><text transform="translate(4362 779) rotate(-80)" textLength="78" lengthAdjust="spacingAndGlyphs">Giles St</text><text transform="translate(4835 714) rotate(-90)" text-anchor="start">Gambrill</text><text transform="translate(4962 1355) rotate(-33)" textLength="140" lengthAdjust="spacingAndGlyphs">Southrun Rd</text><text transform="translate(4330 686) rotate(-14)">Fairfax</text><text transform="translate(5252 2118) rotate(-61)" font-size="26">ess Lanes</text><text transform="translate(2975 665) rotate(45)">Ox Rd</text>
  </g>
</g>
<!-- point-of-interest symbols -->
<g fill="#287f20">
  <path id="tree" d="M3903 921q-3 -8 6 -9q10 -5 16 3q8 6 0 10q-4 4-9 1v6l4 3h-14l4-3v-6q-8 4-7-5z"/>
  <use href="#tree" x="1175" y="-23"/>
</g>
<g stroke="#c75528" stroke-width="2.5"><path id="fork" d="M4213 1361v7q1 4 4 4v9M4217 1362v8M4221 1361v7q-1 4-4 4M4227 1361v20M4227 1361q-4 6-1 12"/><use href="#fork" x="1271" y="640"/></g>
<path d="M4619 1773h7v18h-7zM4630 1773h9v7h-3v4h3v7h-9z" fill="#7d6728"/>
<path d="M3905 1937l3 1 2 7h10l2-7h-12M3911 1949v1M3919 1949v1" stroke="#765346" stroke-width="3" fill="#765346"/>
<path d="M4416 1974l8 8-7 7M4425 1975l-8 14M4422 1982l3 8" stroke="#3b7440" stroke-width="3"/>
<g><path d="M5388 1908q8 4 16 0q8 4 16 0q4 8 3 17q-1 12-19 20q-18-8-19-20q-1-9 3-17z" fill="#4057a8" stroke="#fff" stroke-width="2"/><path d="M5388 1908q8 4 16 0q8 4 16 0l3 8h-38z" fill="#c8424c"/><text x="5404" y="1935" fill="#fff" font-size="21" font-weight="700" text-anchor="middle">95</text></g>
<rect x="5446" y="1936" width="30" height="30" rx="3" fill="#4b65cb"/><path d="M5455 1941h12v14h-12zM5457 1957l-4 5M5465 1957l4 5" stroke="#fff" stroke-width="2.5"/><path d="M5456 1947h10M5458 1952h1M5464 1952h1" stroke="#fff" stroke-width="3"/>
</svg>
    </div>
    <dl class="pl-4">
      <dt class="font-bold">Address</dt><dd class="mt-1 mb-10 text-[#666666]">123 Gourmet Street, New York, NY 10001</dd>
      <dt class="font-bold">Phone</dt><dd class="mt-1 mb-10 text-[#666666]">+1 (555) 123-4567</dd>
      <dt class="font-bold">Email</dt>
    </dl>
  </section>
</main>
<div class="absolute top-[63px] right-0 bottom-0 w-3 bg-linear-to-r from-transparent to-black/[.02]"></div>
</div>
</body>
</html>
